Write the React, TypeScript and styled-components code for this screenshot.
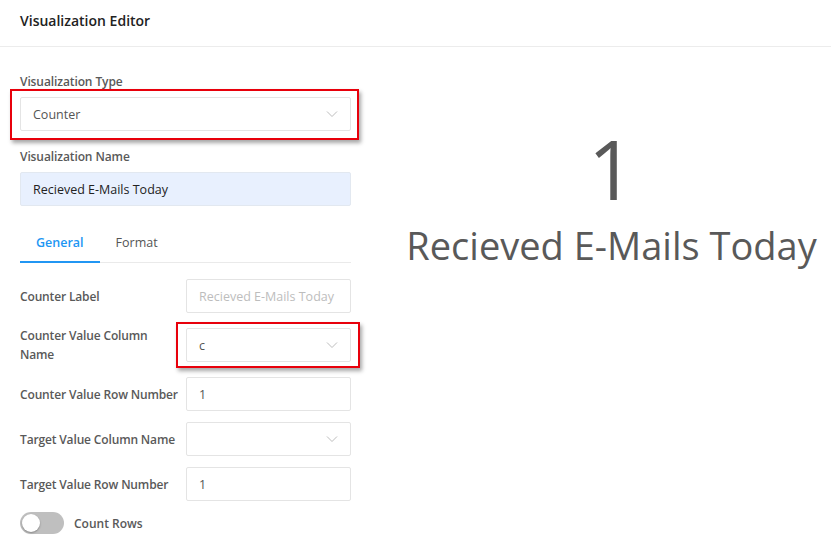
import React from 'react'
import styled, { createGlobalStyle } from 'styled-components';

const GlobalStyle = createGlobalStyle`
  html, body {
    margin: 0;
    padding: 0;
    background: #fff;
    font-family: 'Open Sans', 'Noto Sans', sans-serif;
  }
  * { box-sizing: border-box; }
`;

const Page = styled.div`
  width: 831px;
  height: 555px;
  overflow: hidden;
  background: #fff;
`;

const Header = styled.div`
  height: 47px;
  padding: 0 20px;
  display: flex;
  align-items: center;
  padding-bottom: 6px;
  border-bottom: 1px solid #ececec;
  font-size: 14px;
  font-weight: 600;
  color: #222;
`;

const Body = styled.div`
  display: grid;
  grid-template-columns: 392px 1fr;
`;

const Editor = styled.div`
  padding: 25px 0 0 20px;
  width: 351px;
`;

const Field = styled.div`
  position: relative;
  margin-bottom: 16px;
`;

const FieldLabel = styled.div`
  font-size: 12px;
  font-weight: 600;
  letter-spacing: -0.1px;
  color: #595959;
  line-height: 19px;
  margin-bottom: 6px;
`;

const Box = styled.div<{ $filled?: boolean }>`
  height: 34px;
  display: flex;
  align-items: center;
  justify-content: space-between;
  padding: 0 12px;
  border: 1px solid ${p => (p.$filled ? '#e2e8f0' : '#e4e4e4')};
  border-radius: 2px;
  background: ${p => (p.$filled ? '#e8f0fe' : '#fff')};
  font-size: 12.5px;
  color: ${p => (p.$filled ? '#222' : '#555')};
`;

const Placeholder = styled.span`
  color: #bdbdbd;
`;

const Highlight = styled.div<{ $top: number; $left: number; $right: number; $bottom: number }>`
  position: absolute;
  top: ${p => p.$top}px;
  left: ${p => p.$left}px;
  right: ${p => p.$right}px;
  bottom: ${p => p.$bottom}px;
  border: 2px solid #e8000b;
  box-shadow: 2px 3px 4px rgba(0, 0, 0, 0.35);
  pointer-events: none;
`;

const Tabs = styled.div`
  display: flex;
  margin-top: 20px;
  border-bottom: 1px solid #eaeaea;
  margin-bottom: 16px;
`;

const Tab = styled.div<{ $active?: boolean }>`
  padding: 8px 16px 10px;
  font-size: 12.5px;
  font-weight: ${p => (p.$active ? 600 : 400)};
  color: ${p => (p.$active ? '#2196f3' : '#555')};
  border-bottom: 2px solid ${p => (p.$active ? '#2196f3' : 'transparent')};
  margin-bottom: -1px;
`;

const Row = styled.div`
  position: relative;
  display: grid;
  grid-template-columns: 166px 1fr;
  align-items: center;
  margin-bottom: 11px;
`;

const RowLabel = styled.div`
  font-size: 12px;
  font-weight: 600;
  letter-spacing: -0.15px;
  color: #595959;
  line-height: 19px;
  padding: 2px 4px 2px 0;
`;

const ToggleRow = styled.div`
  display: flex;
  align-items: center;
  gap: 10px;
  font-size: 12px;
  font-weight: 600;
  color: #595959;
`;

const Switch = styled.div`
  position: relative;
  width: 44px;
  height: 22px;
  border-radius: 11px;
  background: #bfbfbf;
`;

const Knob = styled.div`
  position: absolute;
  top: 2px;
  left: 2px;
  width: 18px;
  height: 18px;
  border-radius: 50%;
  background: #fff;
  box-shadow: 0 1px 2px rgba(0, 0, 0, 0.3);
`;

const Preview = styled.div`
  display: flex;
  flex-direction: column;
  align-items: center;
  padding-top: 71px;
  color: #595959;
`;

const BigValue = styled.div`
  font-size: 82px;
  line-height: 100px;
  font-weight: 400;
`;

const BigLabel = styled.div`
  font-size: 38px;
  line-height: 46px;
  white-space: nowrap;
  margin-top: 4px;
`;

const Chevron = () => (
  <svg width="12" height="8" viewBox="0 0 12 8">
    <path d="M1 1.5 L6 6.5 L11 1.5" fill="none" stroke="#bdbdbd" strokeWidth="1" />
  </svg>
);

const Select: React.FC<{ value?: string }> = ({ value }) => (
  <Box>
    <span>{value}</span>
    <Chevron />
  </Box>
);

export default function App() {
  return (
    <Page>
      <GlobalStyle />
      <Header>Visualization Editor</Header>
      <Body>
        <Editor>
          <Field>
            <FieldLabel>Visualization Type</FieldLabel>
            <Select value="Counter" />
            <Highlight $top={17} $left={-10} $right={-8} $bottom={-9} />
          </Field>
          <Field>
            <FieldLabel>Visualization Name</FieldLabel>
            <Box $filled>Recieved E-Mails Today</Box>
          </Field>
          <Tabs>
            <Tab $active>General</Tab>
            <Tab>Format</Tab>
          </Tabs>
          <Row>
            <RowLabel>Counter Label</RowLabel>
            <Box><Placeholder>Recieved E-Mails Today</Placeholder></Box>
          </Row>
          <Row>
            <RowLabel>Counter Value Column Name</RowLabel>
            <Select value="c" />
            <Highlight $top={-2} $left={156} $right={-9} $bottom={-2} />
          </Row>
          <Row>
            <RowLabel>Counter Value Row Number</RowLabel>
            <Box>1</Box>
          </Row>
          <Row>
            <RowLabel>Target Value Column Name</RowLabel>
            <Select />
          </Row>
          <Row>
            <RowLabel>Target Value Row Number</RowLabel>
            <Box>1</Box>
          </Row>
          <ToggleRow>
            <Switch><Knob /></Switch>
            Count Rows
          </ToggleRow>
        </Editor>
        <Preview>
          <BigValue>1</BigValue>
          <BigLabel>Recieved E-Mails Today</BigLabel>
        </Preview>
      </Body>
    </Page>
  )
}
